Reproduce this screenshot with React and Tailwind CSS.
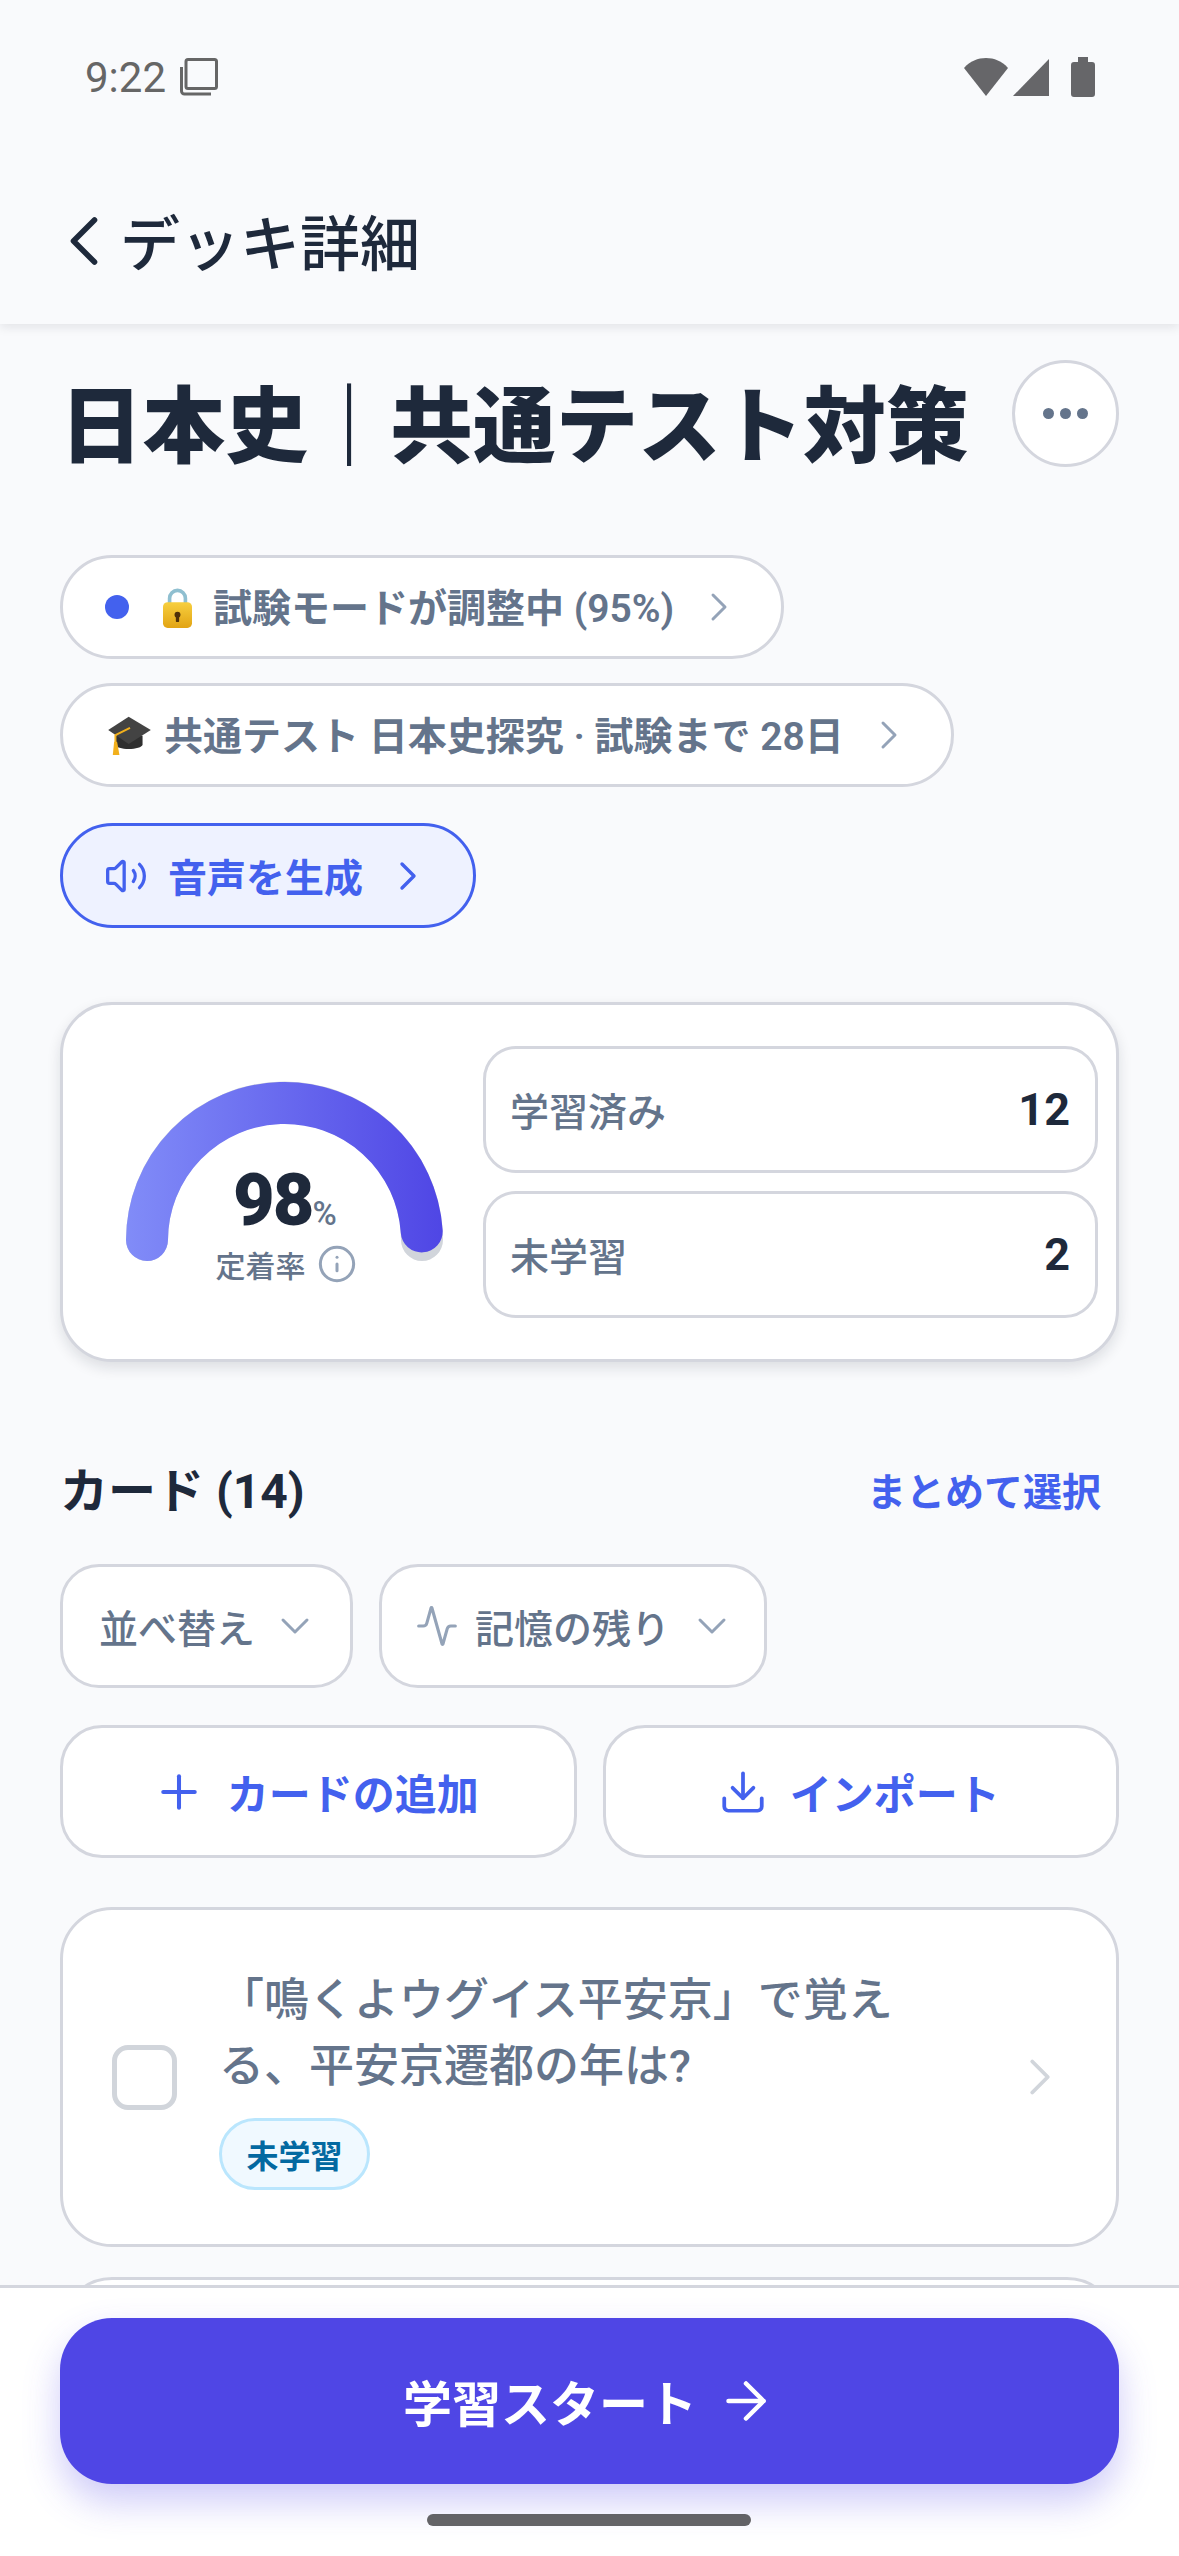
import React from "react";
import { ChevronLeft, ChevronRight, ChevronDown, Volume2, Info, Activity, Plus, Download, ArrowRight } from "lucide-react";

const FONT = { fontFamily: '"Noto Sans CJK JP", "Noto Sans", sans-serif' };

// latin bits are set in Roboto, the line box stays on the CJK font
const R = ({ children }) => <span className="font-['Roboto']">{children}</span>;

const LockEmoji = () => (
  <svg viewBox="0 0 88 124" className="w-[29px] h-[41px] shrink-0">
    <defs>
      <linearGradient id="lockBody" x1="0" y1="0" x2="0" y2="1">
        <stop offset="0" stopColor="#f7cf3f" />
        <stop offset="1" stopColor="#e2a414" />
      </linearGradient>
    </defs>
    <path d="M20 58V34a24 24 0 0 1 48 0v24" fill="none" stroke="#8fbfd0" strokeWidth="11" />
    <rect x="0" y="46" width="88" height="78" rx="14" fill="url(#lockBody)" />
    <circle cx="44" cy="84" r="9" fill="#4f3109" />
    <rect x="39" y="84" width="10" height="22" rx="2" fill="#4f3109" />
  </svg>
);

const CapEmoji = () => (
  <svg viewBox="0 0 129 118" className="w-[43px] h-[39px] shrink-0">
    <path d="M22 60v26c0 8 20 14 40 14s42-6 42-14V60z" fill="#2f2f2f" />
    <path d="M62 2 129 42 62 85 0 42z" fill="#434343" />
    <path d="M66 36 22 58v30" fill="none" stroke="#f2b01c" strokeWidth="6" />
    <path d="M18 78h9l7 40H14z" fill="#f2b01c" />
  </svg>
);

const Pill = ({ children }) => (
  <div className="flex w-fit h-[104px] items-center rounded-full border-[3px] border-[#d4d6de] bg-white pl-[42px] pr-[38px]">
    {children}
    <ChevronRight className="ml-[21px] text-[#94a3b8]" size={48} strokeWidth={1.5} />
  </div>
);

const Gauge = () => (
  <div className="relative w-[360px] h-[240px] ml-[42px] mt-[38px] shrink-0">
    <svg viewBox="0 0 360 240" className="w-[360px] h-[240px]">
      <defs>
        <linearGradient id="gaugeFill" x1="21" y1="0" x2="338" y2="0" gradientUnits="userSpaceOnUse">
          <stop offset="0" stopColor="#818cf8" />
          <stop offset="1" stopColor="#4f46e5" />
        </linearGradient>
      </defs>
      <path d="M42 159 A137.5 137.5 0 0 1 317 159" fill="none" stroke="#d1d5db" strokeWidth="42" strokeLinecap="round" />
      <path d="M42 159 A137.5 137.5 0 0 1 316.7 150.4" fill="none" stroke="url(#gaugeFill)" strokeWidth="42" strokeLinecap="round" />
    </svg>
    <div className="absolute left-0 right-0 top-[79px] flex flex-col items-center">
      <div className="flex items-baseline h-[82px] leading-[82px] font-['Roboto']">
        <span className="text-[72px] font-black tracking-[-2px] text-[#1e293b]">98</span>
        <span className="text-[33px] font-medium text-[#64748b]">%</span>
      </div>
      <div className="ml-[2px] flex items-center gap-[11px] h-[44px]">
        <span className="text-[30px] font-medium text-[#64748b]">定着率</span>
        <Info className="text-[#94a3b8]" size={40} strokeWidth={1.8} />
      </div>
    </div>
  </div>
);

const Stat = ({ label, value }) => (
  <div className="flex h-[127px] items-center justify-between rounded-[33px] border-[3px] border-[#d4d6de] bg-white pl-[24px] pr-[25px]">
    <span className="text-[39px] font-medium text-[#64748b]">{label}</span>
    <span className="font-['Roboto'] text-[45px] font-bold text-[#1e293b]">{value}</span>
  </div>
);

export default function App() {
  return (
    <div className="relative h-[2556px] w-full overflow-hidden bg-[#f9fafc]" style={FONT}>
      {/* header */}
      <div className="h-[324px] shadow-[0_3px_10px_rgba(15,23,42,0.10)]">
        <div className="flex h-[154px] items-center justify-between pl-[85px] pr-[84px] pt-0">
          <div className="flex items-center gap-[14px] text-[#666666]">
            <span className="font-['Roboto'] text-[42px]">9:22</span>
            <svg viewBox="0 0 38 38" className="h-[38px] w-[38px]" fill="none" stroke="currentColor" strokeWidth="3">
              <rect x="6" y="1.5" width="30.5" height="29" rx="2" />
              <path d="M1.5 9v24a3 3 0 0 0 3 3H31" />
            </svg>
          </div>
          <div className="flex items-center text-[#666669]">
            <svg viewBox="0 0 48 40" className="h-[40px] w-[48px]" fill="currentColor">
              <path d="M23 39 1 11C7 4 15 1 23 1s16 3 22 10z" />
            </svg>
            <svg viewBox="0 0 38 40" className="ml-[1px] h-[40px] w-[38px]" fill="currentColor">
              <path d="M37 2v37H1z" />
            </svg>
            <svg viewBox="0 0 24 40" className="ml-[21px] h-[40px] w-[24px]" fill="currentColor">
              <path d="M7 0h10v5h4a3 3 0 0 1 3 3v29a3 3 0 0 1-3 3H3a3 3 0 0 1-3-3V8a3 3 0 0 1 3-3h4z" />
            </svg>
          </div>
        </div>
        <div className="flex h-[170px] items-start pl-[42px] pt-[48px]">
          <ChevronLeft className="mt-[-3px] text-[#1e293b]" size={84} strokeWidth={1.6} />
          <span className="ml-[-6px] text-[60px] font-medium leading-[76px] text-[#1e293b]">デッキ詳細</span>
        </div>
      </div>

      <div className="px-[60px]">
        {/* title */}
        <div className="flex h-[143px] items-end justify-between">
          <h1 className="mb-[-7px] text-[82.6px] font-extrabold leading-[108px] text-[#1e293b] whitespace-nowrap">日本史｜共通テスト対策</h1>
          <button className="flex h-[107px] w-[107px] items-center justify-center gap-[6px] rounded-full border-[3px] border-[#d4d6de] bg-white">
            <i className="h-[11px] w-[11px] rounded-full bg-[#64748b]" />
            <i className="h-[11px] w-[11px] rounded-full bg-[#64748b]" />
            <i className="h-[11px] w-[11px] rounded-full bg-[#64748b]" />
          </button>
        </div>

        {/* pills */}
        <div className="mt-[88px] flex flex-col items-start">
          <Pill>
            <span className="h-[24px] w-[24px] rounded-full bg-[#4361ee]" />
            <span className="ml-[34px] flex"><LockEmoji /></span>
            <span className="ml-[21px] text-[39px] font-semibold text-[#64748b] whitespace-nowrap">試験モードが調整中<R> (95%)</R></span>
          </Pill>
          <div className="mt-[24px]">
            <Pill>
              <span className="ml-[3px] flex"><CapEmoji /></span>
              <span className="ml-[13px] text-[39px] font-semibold text-[#64748b] whitespace-nowrap">共通テスト<R> </R>日本史探究<R> · </R>試験まで<R> 28</R>日</span>
            </Pill>
          </div>
          <div className="mt-[36px] flex h-[105px] w-fit items-center rounded-full border-[3px] border-[#4361ee] bg-[#eef2ff] pl-[41px] pr-[41px]">
            <Volume2 className="text-[#4361ee]" size={44} strokeWidth={1.8} />
            <span className="ml-[20px] text-[39px] font-bold text-[#4361ee]">音声を生成</span>
            <ChevronRight className="ml-[21px] text-[#4361ee]" size={48} strokeWidth={1.7} />
          </div>
        </div>

        {/* stats card */}
        <div className="mt-[74px] flex h-[360px] items-center justify-between rounded-[52px] border-[3px] border-[#d4d6de] bg-white shadow-[0_6px_14px_rgba(15,23,42,0.12)]">
          <Gauge />
          <div className="mr-[18px] flex w-[615px] flex-col gap-[18px]">
            <Stat label="学習済み" value="12" />
            <Stat label="未学習" value="2" />
          </div>
        </div>

        {/* cards section */}
        <div className="mt-[95px] flex h-[64px] items-center justify-between pr-[18px]">
          <span className="text-[48px] font-bold text-[#1e293b]">カード<R> (14)</R></span>
          <span className="text-[39px] font-semibold text-[#4361ee]">まとめて選択</span>
        </div>
        <div className="mt-[43px] flex gap-[26px]">
          <div className="flex h-[124px] w-[293px] items-center rounded-[39px] border-[3px] border-[#d4d6de] bg-white pl-[36px]">
            <span className="text-[39px] font-medium text-[#64748b]">並べ替え</span>
            <ChevronDown className="ml-[16px] text-[#94a3b8]" size={48} strokeWidth={1.5} />
          </div>
          <div className="flex h-[124px] w-[388px] items-center rounded-[39px] border-[3px] border-[#d4d6de] bg-white pl-[33px]">
            <Activity className="text-[#94a3b8]" size={44} strokeWidth={1.7} />
            <span className="ml-[16px] text-[39px] font-medium text-[#64748b]">記憶の残り</span>
            <ChevronDown className="ml-[18px] text-[#94a3b8]" size={48} strokeWidth={1.5} />
          </div>
        </div>
        <div className="mt-[37px] grid grid-cols-2 gap-[26px]">
          <div className="flex h-[133px] items-center justify-center rounded-[42px] border-[3px] border-[#d4d6de] bg-white pr-[6px]">
            <Plus className="text-[#4361ee]" size={54} strokeWidth={1.8} />
            <span className="ml-[21px] text-[42px] font-bold text-[#4361ee]">カードの追加</span>
          </div>
          <div className="flex h-[133px] items-center justify-center rounded-[42px] border-[3px] border-[#d4d6de] bg-white pr-[4px]">
            <Download className="text-[#4361ee]" size={50} strokeWidth={1.8} />
            <span className="ml-[22px] text-[42px] font-bold text-[#4361ee]">インポート</span>
          </div>
        </div>

        {/* card list */}
        <div className="mt-[49px] flex h-[340px] items-center rounded-[52px] border-[3px] border-[#d4d6de] bg-white pl-[49px]">
          <div className="h-[65px] w-[65px] shrink-0 rounded-[16px] border-[5px] border-[#d1d5db] bg-white" />
          <div className="ml-[42px] w-[690px]">
            <p className="text-[45px] font-medium leading-[66px] text-[#64748b]">「鳴くよウグイス平安京」で覚える、平安京遷都の年は<R>?</R></p>
            <span className="mt-[18px] flex h-[72px] w-[151px] items-center justify-center rounded-full border-[3px] border-[#bae6fd] bg-[#f0f9ff] text-[32px] font-bold text-[#0369a1]">未学習</span>
          </div>
          <ChevronRight className="ml-[100px] text-[#d1d5db]" size={62} strokeWidth={1.5} />
        </div>
        <div className="mt-[30px] h-[120px] rounded-[52px] border-[3px] border-[#d4d6de] bg-white" />
      </div>

      {/* bottom bar */}
      <div className="absolute bottom-0 left-0 right-0 h-[271px] border-t-[3px] border-[#d4d6de] bg-white px-[60px] pt-[30px]">
        <div className="flex h-[166px] items-center justify-center rounded-[52px] bg-[#4f46e5] shadow-[0_18px_36px_rgba(79,70,229,0.28)]">
          <span className="text-[49px] font-bold text-white">学習スタート</span>
          <ArrowRight className="ml-[19px] text-white" size={60} strokeWidth={1.8} />
        </div>
        <div className="absolute bottom-[30px] left-[427px] h-[12px] w-[324px] rounded-full bg-[#636366]" />
      </div>
    </div>
  );
}
